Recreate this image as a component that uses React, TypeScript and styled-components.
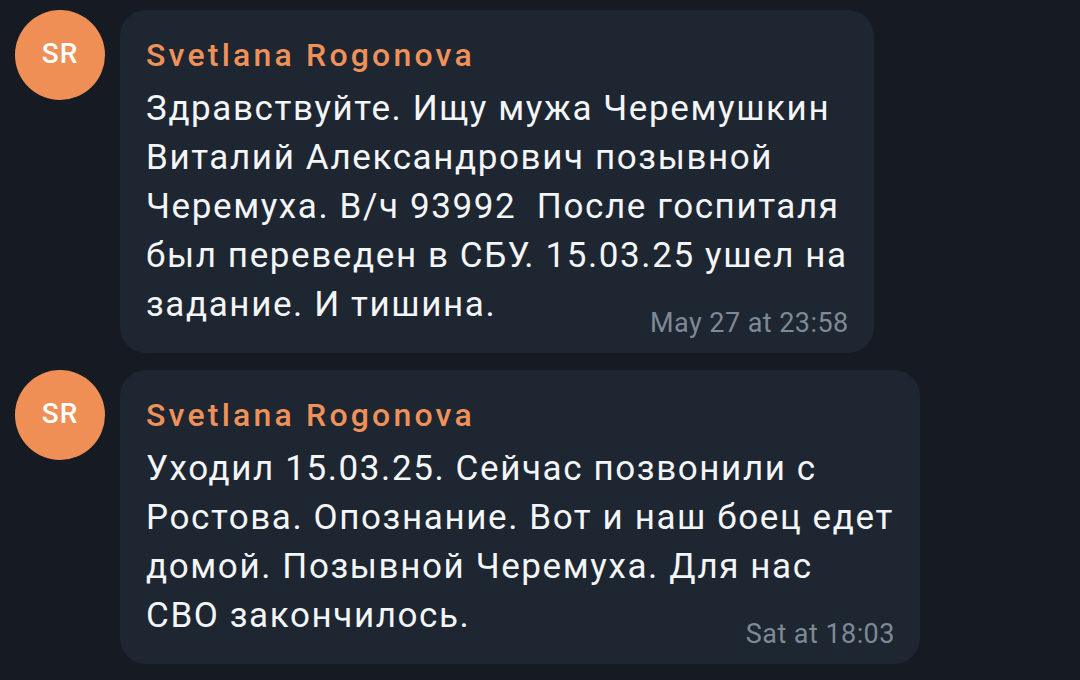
import React from "react";
import styled, { createGlobalStyle } from "styled-components";

interface Message {
  id: number;
  author: string;
  initials: string;
  lines: string[];
  time: string;
}

const messages: Message[] = [
  {
    id: 1,
    author: "Svetlana Rogonova",
    initials: "SR",
    lines: [
      "Здравствуйте. Ищу мужа Черемушкин",
      "Виталий Александрович позывной",
      "Черемуха. В/ч 93992  После госпиталя",
      "был переведен в СБУ. 15.03.25 ушел на",
      "задание. И тишина.",
    ],
    time: "May 27 at 23:58",
  },
  {
    id: 2,
    author: "Svetlana Rogonova",
    initials: "SR",
    lines: [
      "Уходил 15.03.25. Сейчас позвонили с",
      "Ростова. Опознание. Вот и наш боец едет",
      "домой. Позывной Черемуха. Для нас",
      "СВО закончилось.",
    ],
    time: "Sat at 18:03",
  },
];

const GlobalStyle = createGlobalStyle`
  html, body {
    margin: 0;
    padding: 0;
    background: #161b23;
  }
  body {
    font-family: Roboto, "Noto Sans", "Liberation Sans", sans-serif;
    -webkit-font-smoothing: antialiased;
  }
`;

const ChatList = styled.div`
  width: 1080px;
  height: 680px;
  overflow: hidden;
  box-sizing: border-box;
  padding: 10px 0 0 15px;
  display: flex;
  flex-direction: column;
  gap: 17px;
  background: #161b23;
`;

const Row = styled.div`
  display: flex;
  align-items: flex-start;
  gap: 15px;
`;

const Avatar = styled.div`
  flex: none;
  width: 90px;
  height: 90px;
  border-radius: 50%;
  background: #ef8f56;
  color: #ffffff;
  font-size: 28px;
  letter-spacing: 1px;
  font-weight: 500;
  display: flex;
  align-items: center;
  justify-content: center;
  padding-bottom: 4px;
  box-sizing: border-box;
`;

const Bubble = styled.div`
  width: fit-content;
  box-sizing: border-box;
  padding: 24px 26px 14px 26px;
  border-radius: 26px;
  background: #1e2631;
  display: flex;
  flex-direction: column;
`;

const Author = styled.div`
  font-size: 32px;
  line-height: 42px;
  font-weight: 500;
  letter-spacing: 3.2px;
  color: #f0915a;
`;

const Text = styled.div`
  margin-top: 8px;
  font-size: 35px;
  line-height: 49px;
  letter-spacing: 1.6px;
  color: #f3f5f7;
  white-space: pre;
`;

const Footer = styled.div`
  display: flex;
  justify-content: flex-end;
  margin-top: -22px;
`;

const Time = styled.span`
  font-size: 27px;
  line-height: 32px;
  letter-spacing: 0.45px;
  color: #7d8996;
  padding-left: 40px;
  margin-right: -1px;
`;

export default function App() {
  return (
    <>
      <GlobalStyle />
      <ChatList>
        {messages.map((m) => (
          <Row key={m.id}>
            <Avatar>{m.initials}</Avatar>
            <Bubble>
              <Author>{m.author}</Author>
              <Text>
                {m.lines.map((line, i) => (
                  <div key={i}>{line}</div>
                ))}
              </Text>
              <Footer>
                <Time>{m.time}</Time>
              </Footer>
            </Bubble>
          </Row>
        ))}
      </ChatList>
    </>
  );
}
